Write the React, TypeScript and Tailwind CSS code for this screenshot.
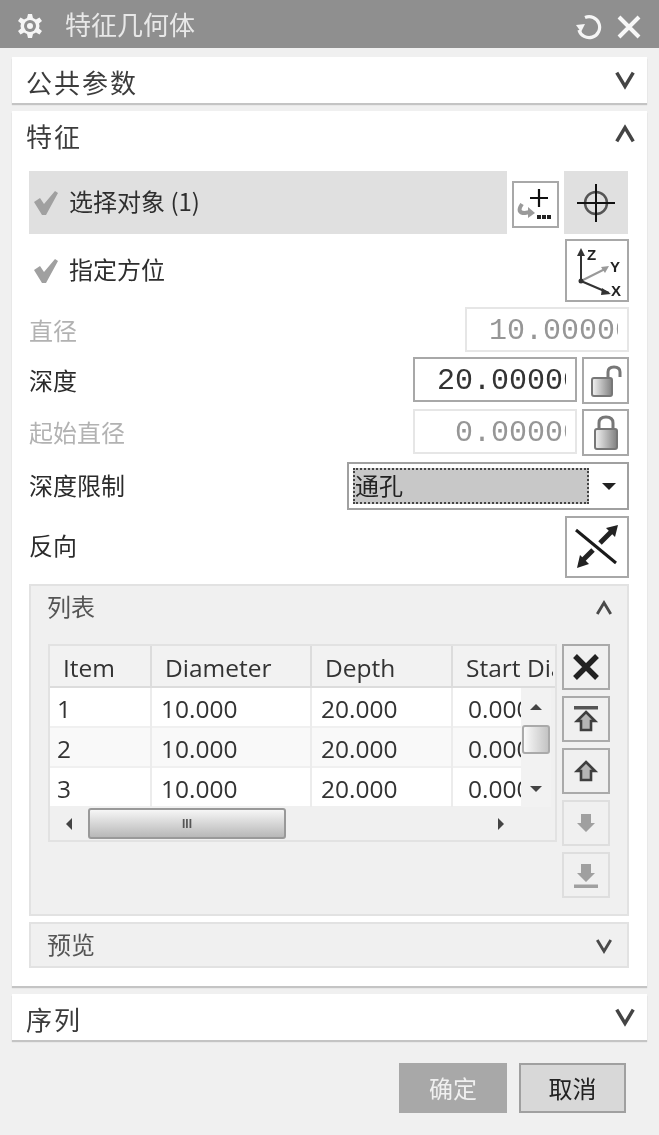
import React from "react";

const cjk = "font-['Noto_Sans_CJK_SC','Liberation_Sans',sans-serif]";

function Chevron({ up, small }: { up?: boolean; small?: boolean }) {
  const s = small ? 18 : 22;
  return (
    <svg width={s} height={s} viewBox="0 0 24 24" fill="none" stroke={small ? "#4a4a4a" : "#444"} strokeWidth="3.8">
      <path d={up ? "M3 20 L12 5 L21 20" : "M3 4 L12 19 L21 4"} />
    </svg>
  );
}

function Check() {
  return (
    <svg width="26" height="26" viewBox="0 0 26 26" className="shrink-0">
      <path d="M1 12 L7 8 L11 14 L22 1 L25 3 L13 25 L9 25 Z" fill="#a0a0a0" />
    </svg>
  );
}

function PanelHead({ title, up }: { title: string; up?: boolean }) {
  return (
    <div className="flex items-center justify-between h-[46px] pl-[14px] pr-[11px]">
      <span className={`${cjk} mt-[3px] text-[26px] leading-[34px] text-[#3c3c3c] tracking-[2px]`}>{title}</span>
      <Chevron up={up} />
    </div>
  );
}

function SubHead({ title, up }: { title: string; up?: boolean }) {
  return (
    <div className="flex items-center justify-between h-[44px] pl-[16px] pr-[14px]">
      <span className={`${cjk} -mt-[4px] text-[24px] leading-[32px] text-[#555]`}>{title}</span>
      <Chevron up={up} small />
    </div>
  );
}

function NumberBox({ value, disabled, width }: { value: string; disabled?: boolean; width: string }) {
  return (
    <div
      className={`${width} h-[45px] flex justify-end items-center overflow-hidden pr-[9px] border-2 bg-white ${
        disabled ? "border-[#e6e6e6]" : "border-[#a8a8a8]"
      }`}
    >
      <div className="overflow-hidden flex justify-end w-full">
        <span
          className={`shrink-0 mr-[-15px] mt-[3px] font-['Liberation_Mono',monospace] text-[30px] leading-[38px] ${
            disabled ? "text-[#969696]" : "text-[#333]"
          }`}
        >
          {value}
        </span>
      </div>
    </div>
  );
}

function LockOpen() {
  return (
    <svg width="36" height="34" viewBox="0 0 36 34">
      <defs>
        <linearGradient id="lk1" x1="0" x2="1" y1="0" y2="0">
          <stop offset="0" stopColor="#f4f4f4" />
          <stop offset="1" stopColor="#808080" />
        </linearGradient>
      </defs>
      <path d="M20 15 V8 Q20 3 26 3 Q32 3 32 8 V13" fill="none" stroke="#777" strokeWidth="3" />
      <rect x="4" y="14" width="20" height="18" rx="2" fill="url(#lk1)" stroke="#777" strokeWidth="2" />
    </svg>
  );
}

function LockClosed() {
  return (
    <svg width="30" height="38" viewBox="0 0 30 38">
      <defs>
        <linearGradient id="lk2" x1="0" x2="1" y1="0" y2="0">
          <stop offset="0" stopColor="#f4f4f4" />
          <stop offset="1" stopColor="#808080" />
        </linearGradient>
      </defs>
      <path d="M8 16 V9 Q8 3 15 3 Q22 3 22 9 V16" fill="none" stroke="#777" strokeWidth="3" />
      <rect x="4" y="15" width="22" height="20" rx="2" fill="url(#lk2)" stroke="#777" strokeWidth="2" />
    </svg>
  );
}

function SideBtn({ children, disabled }: { children: React.ReactNode; disabled?: boolean }) {
  return (
    <div
      className={`w-[48px] h-[46px] flex items-center justify-center border-2 ${
        disabled ? "border-[#dedede]" : "border-[#aaa]"
      }`}
    >
      {children}
    </div>
  );
}

function ArrowGlyph({ down, bar, color }: { down?: boolean; bar?: boolean; color: string }) {
  return (
    <svg width="30" height="32" viewBox="0 0 30 32">
      <g transform={down ? "rotate(180 15 16)" : undefined}>
        {bar && <rect x="3" y="3" width="24" height="3.5" fill={color} />}
        <path
          d={bar ? "M15 9 L24 18 L20 18 L20 27 L10 27 L10 18 L6 18 Z" : "M15 7 L24 16 L20 16 L20 25 L10 25 L10 16 L6 16 Z"}
          fill={down ? color : "#b4b4b4"}
          stroke={down ? "none" : "#3f3f3f"}
          strokeWidth={down ? 0 : 2.6}
        />
      </g>
    </svg>
  );
}

const rows = ["1", "2", "3"];

function Table() {
  return (
    <div className="w-[509px] h-[198px] border-2 border-[#e2e2e2] bg-[#f0f0f0] font-['Open_Sans',sans-serif] text-[#333] overflow-hidden">
      <div className="grid grid-cols-[102px_160px_141px_100px] h-[42px] text-[24.5px] leading-[44px] border-b-2 border-[#dcdcdc] bg-[#f2f2f2]">
        <div className="pl-[13px] border-r-2 border-[#dcdcdc]">Item</div>
        <div className="pl-[13px] border-r-2 border-[#dcdcdc]">Diameter</div>
        <div className="pl-[13px] border-r-2 border-[#dcdcdc]">Depth</div>
        <div className="pl-[13px] whitespace-nowrap overflow-hidden">Start Diameter</div>
      </div>
      <div className="flex h-[119px]">
        <div className="w-[471px] overflow-hidden bg-white">
          {rows.map((r, i) => (
            <div
              key={r}
              className={`grid grid-cols-[102px_160px_141px_68px] h-[40px] text-[24.5px] leading-[41px] ${
                i === 1 ? "bg-[#f9f9f9]" : "bg-white"
              } border-b-2 border-[#f0f0f0]`}
            >
              <div className="pl-[7px] border-r-2 border-[#ececec]">{r}</div>
              <div className="pl-[9px] border-r-2 border-[#ececec]">10.000</div>
              <div className="pl-[9px] border-r-2 border-[#ececec]">20.000</div>
              <div className="pl-[15px] whitespace-nowrap overflow-hidden">0.000</div>
            </div>
          ))}
        </div>
        <div className="w-[30px] flex flex-col items-center bg-[#f2f2f2]">
          <div className="h-[37px] flex items-center justify-center">
            <div className="w-0 h-0 border-x-[6px] border-x-transparent border-b-[6px] border-b-[#444]" />
          </div>
          <div className="w-[28px] h-[29px] border-2 border-[#aaa] rounded-[3px] bg-gradient-to-r from-[#fafafa] to-[#c4c4c4]" />
          <div className="flex-1 pt-[16px] flex items-center justify-center">
            <div className="w-0 h-0 border-x-[6px] border-x-transparent border-t-[6px] border-t-[#444]" />
          </div>
        </div>
      </div>
      <div className="flex items-center h-[33px] w-[470px] relative">
        <div className="w-[38px] flex justify-center">
          <div className="w-0 h-0 border-y-[6px] border-y-transparent border-r-[6px] border-r-[#444]" />
        </div>
        <div className="w-[198px] h-[31px] border-2 border-[#999] rounded-[3px] bg-gradient-to-b from-[#f6f6f6] to-[#b8b8b8] flex items-center justify-center text-[12px] font-bold text-[#555] font-['Liberation_Sans',sans-serif]">
          III
        </div>
        <div className="flex-1 flex justify-end pr-[16px]">
          <div className="w-0 h-0 border-y-[6px] border-y-transparent border-l-[6px] border-l-[#444]" />
        </div>
      </div>
    </div>
  );
}

export default function App() {
  return (
    <div className="w-[659px] h-[1135px] bg-[#f0f0f0] overflow-hidden blur-[0.5px] flex flex-col">
      <div className="h-[48px] bg-[#8f8f8f] flex items-center pl-[17px] pr-[18px] shrink-0">
        <svg width="26" height="26" viewBox="0 0 26 26" className="shrink-0 mt-[4px]">
          <path
            d="M11 1 H15 L16 5 L19 6.5 L22.5 4.5 L25 8 L22 10.5 L22.5 13 L22 15.5 L25 18 L22.5 21.5 L19 19.5 L16 21 L15 25 H11 L10 21 L7 19.5 L3.5 21.5 L1 18 L4 15.5 L3.5 13 L4 10.5 L1 8 L3.5 4.5 L7 6.5 L10 5 Z"
            fill="#f5f5f5"
          />
          <circle cx="13" cy="13" r="6" fill="#8f8f8f" />
          <circle cx="13" cy="13" r="3" fill="#f5f5f5" />
        </svg>
        <span className={`${cjk} ml-[22px] text-[26px] leading-[34px] text-[#e8e8e8]`}>特征几何体</span>
        <div className="ml-auto mt-[6px] flex items-center gap-[15px]">
          <svg width="26" height="30" viewBox="0 0 26 30" fill="none" stroke="#f5f5f5" strokeWidth="3.2">
            <path d="M9 5.5 A10.5 10.5 0 1 1 3 18" />
            <path d="M0 13 L5 20 L9 12 Z" strokeWidth="0" fill="#f5f5f5" />
          </svg>
          <svg width="24" height="24" viewBox="0 0 24 24" fill="none" stroke="#f8f8f8" strokeWidth="4">
            <path d="M2 2 L22 22 M22 2 L2 22" />
          </svg>
        </div>
      </div>

      <div className="mt-[9px] mx-[12px] bg-white shadow-[0_2px_1px_#c4c4c4] shrink-0">
        <PanelHead title="公共参数" />
      </div>

      <div className="mt-[8px] mx-[12px] h-[875px] bg-white shadow-[0_2px_1px_#c4c4c4] shrink-0 flex flex-col">
        <div className="h-[50px]">
          <PanelHead title="特征" up />
        </div>
        <div className="mt-[10px] pl-[17px] pr-[18px] flex flex-col">
          <div className="flex h-[63px]">
            <div className="w-[478px] bg-[#e0e0e0] flex items-center pl-[4px] gap-[10px]">
              <Check />
              <span className={`${cjk} -mt-[3px] text-[24px] leading-[32px] text-[#2e2e2e]`}>选择对象 (1)</span>
            </div>
            <div className="ml-[5px] mt-[10px] w-[47px] h-[47px] border-2 border-[#a8a8a8]">
              <svg width="43" height="43" viewBox="0 0 43 43">
                <path d="M25 6 V24 M16 15 H34" stroke="#111" strokeWidth="2.2" />
                <path d="M8 21 Q2 30 11 30 L16 29" fill="none" stroke="#9a9a9a" strokeWidth="4" />
                <path d="M14 24 L21 30 L14 35 Z" fill="#9a9a9a" />
                <rect x="23" y="32" width="4" height="4" fill="#222" />
                <rect x="28" y="32" width="4" height="4" fill="#222" />
                <rect x="33" y="32" width="4" height="4" fill="#222" />
              </svg>
            </div>
            <div className="ml-[5px] w-[64px] bg-[#e0e0e0] flex items-center justify-center">
              <svg width="40" height="40" viewBox="0 0 40 40" fill="none">
                <circle cx="20" cy="20" r="11" stroke="#555" strokeWidth="2.5" />
                <path d="M20 1 V39 M1 20 H39" stroke="#111" strokeWidth="2" />
              </svg>
            </div>
          </div>
          <div className="flex items-center h-[63px] mt-[5px]">
            <div className="pl-[4px] flex items-center gap-[10px]">
              <Check />
              <span className={`${cjk} -mt-[3px] text-[24px] leading-[32px] text-[#2e2e2e]`}>指定方位</span>
            </div>
            <div className="ml-auto w-[64px] h-[63px] border-2 border-[#a8a8a8] flex items-center justify-center">
              <svg width="48" height="52" viewBox="0 0 48 52" fill="none">
                <path d="M8 8 V36 L36 48" stroke="#333" strokeWidth="2" />
                <path d="M8 36 L32 24" stroke="#999" strokeWidth="2" />
                <path d="M4 11 L8 3 L12 11 Z" fill="#333" />
                <path d="M29 43 L38 49 L28 50 Z" fill="#333" />
                <path d="M28 22 L36 21 L32 28 Z" fill="#999" />
                <circle cx="8" cy="36" r="2.5" fill="#333" />
                <text x="14" y="15" fontSize="15" fontWeight="700" fontFamily="Liberation Sans" fill="#222">Z</text>
                <text x="37" y="27" fontSize="15" fontWeight="700" fontFamily="Liberation Sans" fill="#222">Y</text>
                <text x="38" y="51" fontSize="15" fontWeight="700" fontFamily="Liberation Sans" fill="#222">X</text>
              </svg>
            </div>
          </div>

          <div className="flex items-center justify-between h-[45px] mt-[5px]">
            <span className={`${cjk} text-[24px] text-[#b2b2b2]`}>直径</span>
            <NumberBox value="10.00000" disabled width="w-[164px]" />
          </div>
          <div className="flex items-center h-[47px] mt-[5px]">
            <span className={`${cjk} -mt-[2px] text-[24px] text-[#2b2b2b]`}>深度</span>
            <div className="ml-auto flex gap-[5px] items-start">
              <NumberBox value="20.00000" width="w-[164px]" />
              <div className="w-[47px] h-[47px] border-2 border-[#a8a8a8] flex items-center justify-center">
                <LockOpen />
              </div>
            </div>
          </div>
          <div className="flex items-center h-[47px] mt-[5px]">
            <span className={`${cjk} -mt-[1px] text-[24px] text-[#b2b2b2]`}>起始直径</span>
            <div className="ml-auto flex gap-[5px] items-start">
              <NumberBox value="0.00000" disabled width="w-[164px]" />
              <div className="w-[47px] h-[47px] border-2 border-[#a8a8a8] flex items-center justify-center">
                <LockClosed />
              </div>
            </div>
          </div>
          <div className="flex items-center h-[48px] mt-[6px]">
            <span className={`${cjk} -mt-[2px] text-[24px] text-[#2b2b2b]`}>深度限制</span>
            <div className="ml-auto w-[282px] h-[48px] border-2 border-[#a0a0a0] bg-white flex items-center p-[4px]">
              <div className="w-[236px] h-[36px] bg-[#c8c8c8] border-2 border-dotted border-[#444] flex items-center">
                <span className={`${cjk} -mt-[2px] text-[24px] leading-[30px] text-[#222]`}>通孔</span>
              </div>
              <div className="ml-[13px] w-0 h-0 border-x-[7px] border-x-transparent border-t-[7px] border-t-[#222]" />
            </div>
          </div>
          <div className="flex items-center h-[62px] mt-[6px]">
            <span className={`${cjk} -mt-[4px] text-[24px] text-[#2b2b2b]`}>反向</span>
            <div className="ml-auto w-[64px] h-[62px] border-2 border-[#a8a8a8] flex items-center justify-center">
              <svg width="48" height="50" viewBox="0 0 48 50" fill="none">
                <path d="M3 8 L43 41" stroke="#1a1a1a" strokeWidth="3" />
                <path d="M27 21 L38 10" stroke="#222" strokeWidth="5" />
                <path d="M45 3 L33 6 L42 15 Z" fill="#222" />
                <path d="M20 28 L10 38" stroke="#222" strokeWidth="5" />
                <path d="M4 46 L7 33 L16 42 Z" fill="#222" />
              </svg>
            </div>
          </div>

          <div className="mt-[6px] h-[332px] bg-[#f0f0f0] border-2 border-[#e2e2e2] flex flex-col">
            <SubHead title="列表" up />
            <div className="mt-[14px] pl-[17px] flex gap-[5px] items-start">
              <Table />
              <div className="flex flex-col gap-[6px]">
                <SideBtn>
                  <svg width="34" height="30" viewBox="0 0 34 30" fill="none" stroke="#222" strokeWidth="5.4">
                    <path d="M6 4 L28 26 M28 4 L6 26" />
                  </svg>
                </SideBtn>
                <SideBtn><ArrowGlyph bar color="#555" /></SideBtn>
                <SideBtn><ArrowGlyph color="#555" /></SideBtn>
                <SideBtn disabled><ArrowGlyph down color="#a0a0a0" /></SideBtn>
                <SideBtn disabled><ArrowGlyph down bar color="#a0a0a0" /></SideBtn>
              </div>
            </div>
          </div>

          <div className="mt-[6px] h-[46px] bg-[#f0f0f0] border-2 border-[#e2e2e2]">
            <SubHead title="预览" />
          </div>
        </div>
      </div>

      <div className="mt-[8px] mx-[12px] bg-white shadow-[0_2px_1px_#c4c4c4] shrink-0">
        <PanelHead title="序列" />
      </div>

      <div className="mt-[23px] flex justify-end gap-[12px] pr-[33px]">
        <div className={`${cjk} w-[108px] h-[50px] bg-[#a8a8a8] flex items-center justify-center text-[24px] text-[#f0f0f0]`}>
          确定
        </div>
        <div className={`${cjk} w-[107px] h-[50px] bg-[#d8d8d8] border-2 border-[#a0a0a0] flex items-center justify-center text-[24px] text-[#222]`}>
          取消
        </div>
      </div>
    </div>
  );
}
